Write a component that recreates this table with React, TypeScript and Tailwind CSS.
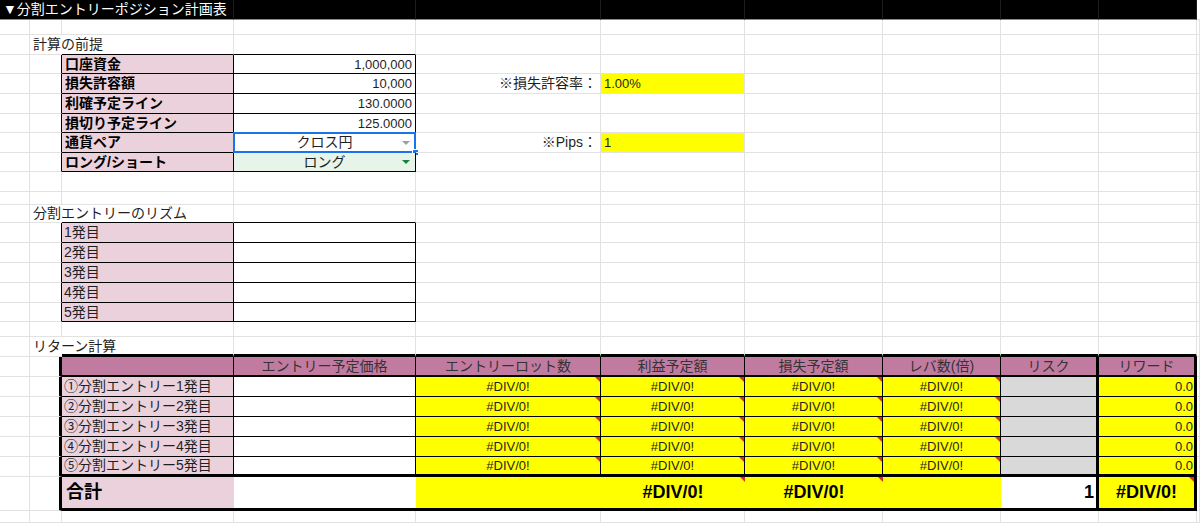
import type { ReactNode } from "react";

/**
 * 分割エントリーポジション計画表
 * Spreadsheet-style sheet laid out on a fixed column grid
 */

const COLS =
  "grid grid-rows-[100%] grid-cols-[30px_32px_172px_182px_185px_144px_138px_118px_98px_98px_3px]";

// border presets (right / bottom)
const G_R = "border-r border-r-[#e2e2e2]";
const G_B = "border-b border-b-[#e2e2e2]";
const K_R = "border-r border-r-black";
const K_B = "border-b border-b-black";
const K3_R = "border-r-[3px] border-r-black";
const K3_B = "border-b-[3px] border-b-black";
const K2_B = "border-b-2 border-b-black";

const PINK = "bg-[#ead1dc]";
const MAGENTA = "bg-[#c27ba0]";
const YELLOW = "bg-[#ffff00]";
const GRAY = "bg-[#d9d9d9]";

interface CellSpec {
  r?: string;
  b?: string;
  cls?: string;
  children?: ReactNode;
}

function Cell({ r = G_R, b = G_B, cls = "", children }: CellSpec) {
  return (
    <div
      className={`relative flex min-h-0 min-w-0 items-center whitespace-nowrap ${r} ${b} ${cls}`}
    >
      {children}
    </div>
  );
}

function SheetRow({ h, cells = {} }: { h: string; cells?: Record<number, CellSpec> }) {
  return (
    <div className={`${COLS} ${h}`}>
      {Array.from({ length: 11 }, (_, i) => (
        <Cell key={i} {...(cells[i] ?? {})} />
      ))}
    </div>
  );
}

// red comment marker in the top-right corner of a cell
function Tri() {
  return (
    <span className="absolute right-0 top-0 h-0 w-0 border-l-[5px] border-t-[5px] border-l-transparent border-t-[#e5262b]" />
  );
}

function Arrow({ green = false }: { green?: boolean }) {
  return (
    <span
      className={`absolute right-[5px] top-1/2 h-0 w-0 -translate-y-1/2 border-x-[4px] border-t-[4px] border-x-transparent ${
        green ? "border-t-[#188038]" : "border-t-[#9e9e9e]"
      }`}
    />
  );
}

const premise = [
  { label: "口座資金", value: "1,000,000", h: "h-[19px]" },
  { label: "損失許容額", value: "10,000", h: "h-[20px]" },
  { label: "利確予定ライン", value: "130.0000", h: "h-[20px]" },
  { label: "損切り予定ライン", value: "125.0000", h: "h-[19px]" },
];

const headers = [
  "エントリー予定価格",
  "エントリーロット数",
  "利益予定額",
  "損失予定額",
  "レバ数(倍)",
  "リスク",
  "リワード",
];

const entries = ["①", "②", "③", "④", "⑤"];

const LABEL = `${PINK} pl-[3px] font-bold text-black`;
const NUM = "text-[13px]";
const BIG = "text-[18px] font-bold text-black";

export default function App() {
  return (
    <div className="h-[523px] w-[1200px] overflow-hidden bg-white font-['Liberation_Sans','Noto_Sans_CJK_JP',sans-serif] text-[14px] leading-[15px] text-[#1f1f1f]">
      {/* Title bar */}
      <div className={`${COLS} h-[20px]`}>
        <div className="col-span-3 flex items-center whitespace-nowrap border-b border-r border-b-[#8a8a8a] border-r-[#1c1c1c] bg-black pl-[3px] text-[14px] text-white">
          ▼分割エントリーポジション計画表
        </div>
        {[0, 1, 2, 3, 4, 5, 6].map((i) => (
          <div
            key={i}
            className="border-b border-r border-b-[#8a8a8a] border-r-[#1c1c1c] bg-black"
          />
        ))}
        <div className="border-b border-b-[#e2e2e2]" />
      </div>

      <SheetRow h="h-[15px]" />

      {/* 計算の前提 */}
      <SheetRow
        h="h-[20px]"
        cells={{
          1: { r: "", cls: "pl-[3px]", children: "計算の前提" },
          2: { b: K_B },
          3: { b: K_B },
        }}
      />
      {premise.map((p, i) => (
        <SheetRow
          key={p.label}
          h={p.h}
          cells={{
            1: { r: K_R },
            2: { r: K_R, b: K_B, cls: LABEL, children: p.label },
            3: { r: K_R, b: K_B, cls: `justify-end pr-[3px] ${NUM}`, children: p.value },
            ...(i === 1
              ? {
                  4: { cls: "justify-end pr-[3px]", children: "※損失許容率：" },
                  5: { cls: `${YELLOW} pl-[3px] ${NUM}`, children: "1.00%" },
                }
              : {}),
          }}
        />
      ))}
      <SheetRow
        h="h-[20px]"
        cells={{
          1: { r: K_R },
          2: { r: K_R, b: K_B, cls: LABEL, children: "通貨ペア" },
          3: {
            r: K_R,
            b: K_B,
            cls: "justify-center",
            children: (
              <>
                クロス円
                <Arrow />
                <span className="pointer-events-none absolute -inset-[1px] border-2 border-[#1a73e8]" />
                <span className="absolute -bottom-[4px] -right-[4px] h-[7px] w-[7px] border border-white bg-[#1a73e8]" />
              </>
            ),
          },
          4: { cls: "justify-end pr-[3px]", children: "※Pips：" },
          5: { cls: `${YELLOW} pl-[3px] ${NUM}`, children: "1" },
        }}
      />
      <SheetRow
        h="h-[19px]"
        cells={{
          1: { r: K_R },
          2: { r: K_R, b: K_B, cls: LABEL, children: "ロング/ショート" },
          3: {
            r: K_R,
            b: K_B,
            cls: "justify-center bg-[#e6f4ea]",
            children: (
              <>
                ロング
                <Arrow green />
              </>
            ),
          },
        }}
      />
      <SheetRow h="h-[20px]" />
      <SheetRow h="h-[13px]" />

      {/* 分割エントリーのリズム */}
      <SheetRow
        h="h-[18px]"
        cells={{
          1: { r: "", cls: "pl-[3px]", children: "分割エントリーのリズム" },
          2: { b: K_B },
          3: { b: K_B },
        }}
      />
      {[1, 2, 3, 4, 5].map((n) => (
        <SheetRow
          key={n}
          h={n === 5 ? "h-[19px]" : "h-[20px]"}
          cells={{
            1: { r: K_R },
            2: { r: K_R, b: K_B, cls: `${PINK} pl-[2px]`, children: `${n}発目` },
            3: { r: K_R, b: K_B },
          }}
        />
      ))}
      <SheetRow h="h-[15px]" />

      {/* リターン計算 */}
      <SheetRow
        h="h-[20px]"
        cells={{
          1: { r: "", cls: "pl-[3px]", children: "リターン計算" },
          2: { b: K3_B },
          3: { b: K3_B },
          4: { b: K3_B },
          5: { b: K3_B },
          6: { b: K3_B },
          7: { b: K3_B },
          8: { b: K3_B },
          9: { b: K3_B },
        }}
      />
      <SheetRow
        h="h-[20px]"
        cells={{
          1: { r: K3_R },
          2: { r: K_R, b: K2_B, cls: MAGENTA },
          ...Object.fromEntries(
            headers.map((t, i) => [
              i + 3,
              {
                r: i >= 5 ? K3_R : K_R,
                b: K2_B,
                cls: `${MAGENTA} justify-center text-[#333]`,
                children: t,
              },
            ])
          ),
        }}
      />
      {entries.map((mark, idx) => {
        const b = idx === entries.length - 1 ? K3_B : K_B;
        const err = `${YELLOW} justify-center ${NUM}`;
        return (
          <SheetRow
            key={mark}
            h="h-[20px]"
            cells={{
              1: { r: K3_R },
              2: { r: K_R, b, cls: `${PINK} pl-[2px]`, children: `${mark}分割エントリー${idx + 1}発目` },
              3: { r: K_R, b },
              4: { r: K_R, b, cls: err, children: <>#DIV/0!<Tri /></> },
              5: { r: K_R, b, cls: err, children: <>#DIV/0!<Tri /></> },
              6: { r: K_R, b, cls: err, children: <>#DIV/0!<Tri /></> },
              7: { r: K_R, b, cls: err, children: <>#DIV/0!<Tri /></> },
              8: { r: K3_R, b, cls: GRAY },
              9: { r: K3_R, b, cls: `${YELLOW} justify-end pr-[1px] ${NUM}`, children: "0.0" },
            }}
          />
        );
      })}

      {/* 合計 */}
      <SheetRow
        h="h-[34px]"
        cells={{
          1: { r: K3_R },
          2: { r: "", b: K3_B, cls: `${PINK} pl-[4px] text-[18px] font-bold text-black`, children: "合計" },
          3: { r: "", b: K3_B },
          4: { r: "", b: K3_B, cls: YELLOW },
          5: { r: "", b: K3_B, cls: `${YELLOW} justify-center ${BIG}`, children: <>#DIV/0!<Tri /></> },
          6: { r: "", b: K3_B, cls: `${YELLOW} justify-center ${BIG}`, children: <>#DIV/0!<Tri /></> },
          7: { r: "", b: K3_B, cls: YELLOW },
          8: { r: K3_R, b: K3_B, cls: `justify-end pr-[2px] ${BIG}`, children: "1" },
          9: { r: K3_R, b: K3_B, cls: `${YELLOW} justify-center ${BIG}`, children: <>#DIV/0!<Tri /></> },
        }}
      />
      <SheetRow h="h-[12px]" />
    </div>
  );
}
